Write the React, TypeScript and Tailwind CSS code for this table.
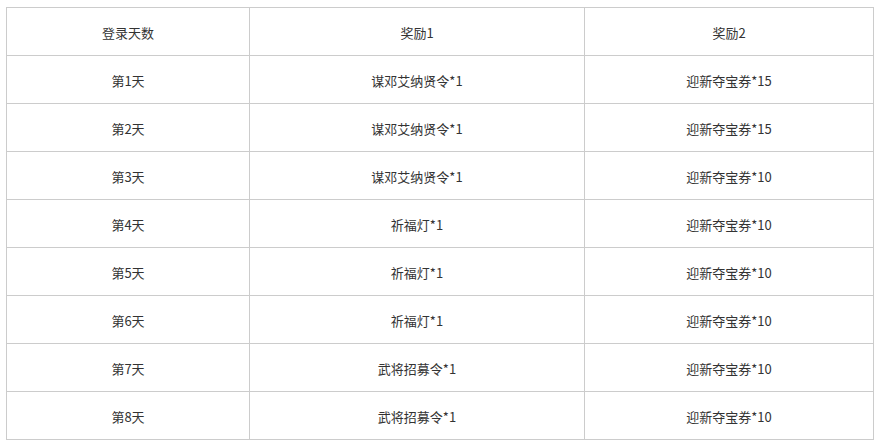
import React from "react";

const rows = [
  ["第1天", "谋邓艾纳贤令*1", "迎新夺宝券*15"],
  ["第2天", "谋邓艾纳贤令*1", "迎新夺宝券*15"],
  ["第3天", "谋邓艾纳贤令*1", "迎新夺宝券*10"],
  ["第4天", "祈福灯*1", "迎新夺宝券*10"],
  ["第5天", "祈福灯*1", "迎新夺宝券*10"],
  ["第6天", "祈福灯*1", "迎新夺宝券*10"],
  ["第7天", "武将招募令*1", "迎新夺宝券*10"],
  ["第8天", "武将招募令*1", "迎新夺宝券*10"],
];

export default function App() {
  return (
    <div
      className="w-[880px] h-[446px] bg-white pl-[6px] pt-[7px]"
      style={{ fontFamily: '"Noto Sans CJK SC", "Noto Sans", sans-serif' }}
    >
      <table className="border-collapse text-[13px] text-[#333333] table-fixed w-[867px]">
        <colgroup>
          <col className="w-[243px]" />
          <col className="w-[335px]" />
          <col className="w-[289px]" />
        </colgroup>
        <tbody>
          <tr className="h-[48px]">
            <td className="border border-[#cccccc] text-center align-middle pt-[2px]">登录天数</td>
            <td className="border border-[#cccccc] text-center align-middle pt-[2px]">奖励1</td>
            <td className="border border-[#cccccc] text-center align-middle pt-[2px]">奖励2</td>
          </tr>
          {rows.map((r, i) => (
            <tr key={i} className="h-[48px]">
              {r.map((c, j) => (
                <td key={j} className="border border-[#cccccc] text-center align-middle pt-[2px]">
                  {c}
                </td>
              ))}
            </tr>
          ))}
        </tbody>
      </table>
    </div>
  );
}
